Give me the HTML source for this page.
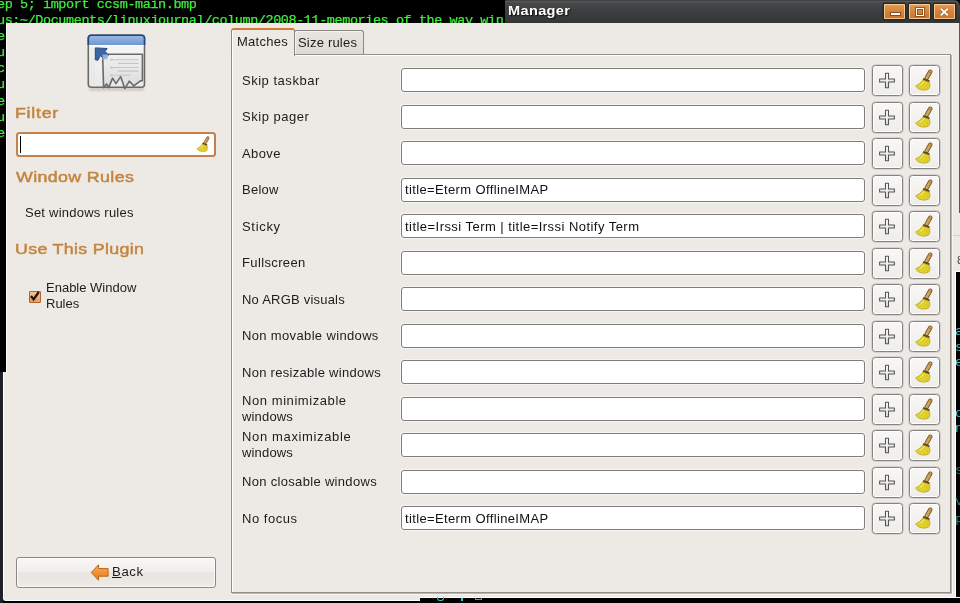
<!DOCTYPE html>
<html><head><meta charset="utf-8">
<style>
*{margin:0;padding:0;box-sizing:border-box}
html,body{width:960px;height:603px;overflow:hidden;background:#000}
body{position:relative;font-family:"Liberation Sans",sans-serif;font-size:13px;color:#1a1a1a}
.a{position:absolute}
.g{will-change:transform}
.term{position:absolute;font-family:"Liberation Mono",monospace;font-size:13.5px;letter-spacing:-0.43px;color:#3cec3c;-webkit-text-stroke:0.25px #3cec3c;white-space:pre;line-height:16.2px}
.h{position:absolute;font-weight:normal;font-size:15.5px;color:#c4843f;-webkit-text-stroke:0.5px #c4843f;white-space:nowrap;line-height:18px;transform-origin:0 0}
.t{position:absolute;white-space:nowrap;color:#1c1c1c;line-height:16px}
.entry{position:absolute;left:401px;width:464px;height:24px;background:#fff;border:1px solid #7f7d7a;border-radius:3px;box-shadow:0 0 0 1px rgba(255,255,255,.5)}
.btn{position:absolute;width:31px;height:31px;border:1px solid #858380;border-radius:3.5px;background:linear-gradient(#f8f7f5,#efedea);box-shadow:inset 0 0 0 1px #fff, 0 0 0 .5px rgba(120,118,115,.4)}
.btn svg{position:absolute;left:-1px;top:-1px}
.lbl{position:absolute;left:242px;white-space:nowrap;color:#1c1c1c;line-height:16px}
.etx{position:absolute;left:405px;white-space:nowrap;color:#111;line-height:16px}
</style></head><body>
<div class="term g" style="left:-2.8px;top:-2.6px">ep 5; import ccsm-main.bmp
us:~/Documents/linuxjournal/column/2008-11-memories of the way win</div>
<div class="term g" style="left:-2.8px;top:28.7px">e</div><div class="term g" style="left:-2.8px;top:44.9px">u</div><div class="term g" style="left:-2.8px;top:61.1px">c</div><div class="term g" style="left:-2.8px;top:77.3px">u</div><div class="term g" style="left:-2.8px;top:93.5px">e</div><div class="term g" style="left:-2.8px;top:109.7px">u</div><div class="term g" style="left:-2.8px;top:125.9px">e</div>
<div class="a" style="left:505px;top:0;width:455px;height:23px;background:linear-gradient(#2a2b2b 0,#58595a 1px,#474849 3px,#3d3e3f 50%,#343536 100%);border-top-right-radius:6px"></div>
<div class="a g" style="left:508px;top:3px;font-weight:bold;font-size:13.5px;line-height:16px;color:#fff;text-shadow:1px 1px 1px #111;letter-spacing:0.3px;transform:scaleX(1.08);transform-origin:0 0">Manager</div>
<div class="a" style="left:884px;top:4px;width:21px;height:15px;border-radius:1px;background:linear-gradient(#e79c52,#d6833a 50%,#cc7630);box-shadow:0 0 0 1.5px #262828, inset 0 0 0 1px rgba(255,222,175,.75)"></div><div class="a" style="left:909px;top:4px;width:21px;height:15px;border-radius:1px;background:linear-gradient(#e79c52,#d6833a 50%,#cc7630);box-shadow:0 0 0 1.5px #262828, inset 0 0 0 1px rgba(255,222,175,.75)"></div><div class="a" style="left:934px;top:4px;width:21px;height:15px;border-radius:1px;background:linear-gradient(#e79c52,#d6833a 50%,#cc7630);box-shadow:0 0 0 1.5px #262828, inset 0 0 0 1px rgba(255,222,175,.75)"></div><div class="a" style="left:891px;top:12.5px;width:8.5px;height:2.6px;background:#fff;box-shadow:0 0 0 1px rgba(80,35,0,.55)"></div><div class="a" style="left:916px;top:8px;width:7.6px;height:7.6px;border:1.7px solid #fff;box-shadow:0 0 0 1px rgba(80,35,0,.5), inset 0 0 0 1px rgba(80,35,0,.5)"></div><svg class="a" style="left:938px;top:5px" width="13" height="13" viewBox="0 0 13 13"><path d="M2.8 3.6l7 6.6M9.8 3.6l-7 6.6" stroke="#5a2a00" stroke-opacity=".4" stroke-width="3.2"/><path d="M2.8 3.6l7 6.6M9.8 3.6l-7 6.6" stroke="#fff" stroke-width="1.9"/></svg>
<div class="a" style="left:6px;top:23px;width:954px;height:575px;background:#edeae6;border-left:1px solid #fff"></div>
<div class="a" style="left:958.5px;top:23px;width:1px;height:190px;background:#5a5856"></div>
<div class="a" style="left:952px;top:235px;width:8px;height:1px;background:#d6d3cf"></div>
<div class="a g" style="left:957.3px;top:251.5px;font-size:11.5px;line-height:16px;color:#4a4a4a">8</div>
<div class="a" style="left:0;top:372px;width:3px;height:231px;background:#1d2029"></div>
<div class="a" style="left:3px;top:372px;width:417px;height:229px;background:#edeae6;border-left:1px solid #fff;border-bottom:1px solid #fff;border-bottom-left-radius:3px"></div>
<div class="a" style="left:956px;top:272px;width:4px;height:331px;background:#000;box-shadow:-1px -1px 0 #fff"></div>
<div class="a" style="left:420px;top:598px;width:540px;height:5px;background:#000;box-shadow:0 -1px 0 #fff"></div>
<div class="a g" style="left:955px;top:324.3px;font-family:'Liberation Mono',monospace;font-size:13.5px;line-height:16.2px;color:#3cc6c6">a</div><div class="a g" style="left:955px;top:340.3px;font-family:'Liberation Mono',monospace;font-size:13.5px;line-height:16.2px;color:#3cc6c6">s</div><div class="a g" style="left:955px;top:355.3px;font-family:'Liberation Mono',monospace;font-size:13.5px;line-height:16.2px;color:#3cc6c6">e</div><div class="a g" style="left:955px;top:406.3px;font-family:'Liberation Mono',monospace;font-size:13.5px;line-height:16.2px;color:#3cc6c6">o</div><div class="a g" style="left:955px;top:421.3px;font-family:'Liberation Mono',monospace;font-size:13.5px;line-height:16.2px;color:#3cc6c6">n</div><div class="a g" style="left:955px;top:463.3px;font-family:'Liberation Mono',monospace;font-size:13.5px;line-height:16.2px;color:#2f7878">s</div><div class="a g" style="left:955px;top:494.3px;font-family:'Liberation Mono',monospace;font-size:13.5px;line-height:16.2px;color:#2f7878">v</div><div class="a g" style="left:955px;top:514.3px;font-family:'Liberation Mono',monospace;font-size:13.5px;line-height:16.2px;color:#2f7878">F</div><div class="a" style="left:956px;top:271px;width:4px;height:1px;background:#fff"></div><div class="a" style="left:437px;top:597px;width:7px;height:4px;border:1px solid #3cc6c6;border-top:none;border-radius:0 0 3px 3px"></div><div class="a" style="left:461px;top:598px;width:2px;height:3px;background:#3cc6c6"></div><div class="a" style="left:475px;top:598px;width:7px;height:2px;border:1px solid #6a9a7a;border-top:none"></div>
<svg class="a" style="left:85px;top:32px" width="62" height="62" viewBox="0 0 62 62">
<defs><linearGradient id="tb" x1="0" y1="0" x2="0" y2="1"><stop offset="0" stop-color="#9ab9e6"/><stop offset="1" stop-color="#6f97d0"/></linearGradient>
<linearGradient id="bd" x1="0" y1="0" x2="0" y2="1"><stop offset="0" stop-color="#f8f8f8"/><stop offset="1" stop-color="#e9e9e9"/></linearGradient>
<linearGradient id="pp" x1="0" y1="0" x2="0" y2="1"><stop offset="0" stop-color="#f0f0f0"/><stop offset="1" stop-color="#dcdcdc"/></linearGradient>
<filter id="bl"><feGaussianBlur stdDeviation="1.2"/></filter></defs>
<rect x="4" y="55" width="55" height="4" rx="2" fill="#000" opacity=".12" filter="url(#bl)"/>
<rect x="3.3" y="3.3" width="56.2" height="52" rx="3" fill="url(#bd)" stroke="#6a6a68" stroke-width="1.6"/>
<path d="M3.3 6.3a3 3 0 0 1 3-3h50.2a3 3 0 0 1 3 3v6.8H3.3z" fill="url(#tb)"/>
<path d="M3.3 13.1V6.3a3 3 0 0 1 3-3h50.2a3 3 0 0 1 3 3v6.8" fill="none" stroke="#23457c" stroke-width="1.6"/>
<path d="M4.2 13.6h54.4" stroke="#fafbfd" stroke-width="1.2"/>
<path d="M6.5 16v37M9 16v37" stroke="#e2e2e2" stroke-width=".8"/>
<path d="M17.6 22.3H57.4V48.6l-2 .3-6.6 5-4.4-4.7-4.6 7.4-4.2-12-4.6 7-3.4-5.5-4 9.5-2-3.7-3 3.7z" fill="url(#pp)" stroke="#6a6a68" stroke-width="1.6" stroke-linejoin="round"/>
<path d="M25.5 27.8h28M33 31.4h20.5M25.5 35.5h28M33 39.1h20.5M25.5 43.2h20" stroke="#c6c6c6" stroke-width="1.1"/>
<circle cx="26.5" cy="27.8" r="1" fill="#c0c0c0"/><circle cx="26.5" cy="35.5" r="1" fill="#c0c0c0"/><circle cx="26.5" cy="43.2" r="1" fill="#c0c0c0"/>
<path d="M10.3 15.9l11.8.6-2.1 3 3.6 3.6-4.6 3.6-3.6-3.1-2.5 4.7-2.6-.5z" fill="#3d66a6" stroke="#264b84" stroke-width="1" stroke-linejoin="round"/>
<path d="M17.5 22.5h5.5v5h-5.5z" fill="#a9c1e4" opacity=".8"/>
</svg>
<div class="h g" style="left:15.2px;top:104px;transform:scaleX(1.15);letter-spacing:0.64px">Filter</div>
<div class="a" style="left:16px;top:132px;width:200px;height:25px;background:#fff;border:2px solid #c4804a;border-radius:3.5px"></div>
<div class="a" style="left:20px;top:136px;width:1px;height:17px;background:#000"></div>
<div class="a" style="left:0;top:0"><svg width="23" height="23" viewBox="0 0 31 31" style="position:absolute;left:192.3px;top:133px"><path d="M21.3 6.7L17.6 13.2" stroke="#7b5524" stroke-width="4.4" stroke-linecap="round"/>
<path d="M21.3 6.7L17.6 13.2" stroke="#cba45e" stroke-width="2.7" stroke-linecap="round"/>
<circle cx="21" cy="7.4" r=".6" fill="#8a6030"/>
<path d="M14 14.1L20.4 16.6" stroke="#5a4626" stroke-width="2.5"/>
<path d="M13.8 15.1L20.5 17.6C21.1 19.6 21 22 20 23.6C18 25.4 13.2 25.6 10.1 24.1C8.4 23.2 7.2 22.1 6.8 20.8C9.5 19.6 12.2 17.6 13.8 15.1Z" fill="#e4d42e" stroke="#bca820" stroke-width=".9" stroke-linejoin="round"/>
<path d="M10.4 22.6c2.2-1 4.3-3 5.5-5.2M14 24.2c1.8-1.4 3.4-3.6 4.2-5.9M17.6 24.3c.9-1.3 1.6-3.2 1.8-5" stroke="#cdb923" stroke-width=".7" fill="none"/>
<path d="M11.4 20.6c1.4-.9 2.8-2.4 3.6-3.9" stroke="#f7f090" stroke-width="1" fill="none"/></svg></div>
<div class="h g" style="left:15.6px;top:168px;transform:scaleX(1.15);letter-spacing:0.31px">Window Rules</div>
<div class="t g" style="left:25px;top:204.7px;letter-spacing:0.23px">Set windows rules</div>
<div class="h g" style="left:15.4px;top:240px;transform:scaleX(1.15);letter-spacing:0.27px">Use This Plugin</div>
<div class="a" style="left:28.5px;top:290.5px;width:12px;height:12px;background:linear-gradient(#f4c397,#e59d62);border:1px solid #b3642c;border-radius:1px"></div><svg class="a" style="left:27px;top:288px" width="15" height="15" viewBox="0 0 15 15"><path d="M4 8l2.6 3.4L11.8 4" stroke="#231208" stroke-width="2.2" fill="none"/></svg>
<div class="t g" style="left:45.8px;top:279.9px">Enable Window<br>Rules</div>
<div class="a" style="left:16px;top:557px;width:200px;height:31px;border:1px solid #8a8784;border-radius:3px;background:linear-gradient(#f9f8f6,#f0eeeb 48%,#e8e5e1 52%,#edeae7);box-shadow:inset 0 0 0 1px rgba(255,255,255,.7)"></div>
<svg class="a" style="left:89px;top:563px" width="21" height="19" viewBox="0 0 21 19"><defs><linearGradient id="ar" x1="0" y1="0" x2="0" y2="1"><stop offset="0" stop-color="#fbb060"/><stop offset="1" stop-color="#e77514"/></linearGradient></defs><path d="M2.3 9.5L9.5 1.8v3.8h9.6v7.6H9.5v4z" fill="url(#ar)" stroke="#c2620f" stroke-width="1" stroke-linejoin="round"/></svg>
<div class="t g" style="left:112px;top:563.8px;letter-spacing:0.6px;font-size:13.2px"><span style="text-decoration:underline;text-underline-offset:1px">B</span>ack</div>
<div class="a" style="left:231px;top:54px;width:720px;height:539px;border:1px solid #948f8a;box-shadow:inset 1px 1px 0 #fff, 1px 1px 0 #b9b4ae, 2px 2px 0 #f8f6f3"></div>
<div class="a" style="left:231px;top:28px;width:64px;height:28px;background:#edeae6;border:1px solid #8b8884;border-bottom:none;border-top:2px solid #d67a3a;border-radius:3px 3px 0 0;box-shadow:inset 1px 0 0 #fff"></div>
<div class="t g" style="left:236.9px;top:34.2px;letter-spacing:0.25px">Matches</div>
<div class="a" style="left:294px;top:30px;width:70px;height:24px;background:linear-gradient(#e8e5e1,#dedbd7);border:1px solid #8b8884;border-bottom:none;border-radius:3px 3px 0 0;box-shadow:inset 1px 1px 0 rgba(255,255,255,.6)"></div>
<div class="t g" style="left:298.2px;top:34.7px;letter-spacing:0.2px">Size rules</div>
<div class="entry" style="top:68.0px"></div><div class="lbl g" style="top:72.8px;letter-spacing:0.518px">Skip taskbar</div><div class="btn" style="left:872px;top:65.0px"><svg width="31" height="31" viewBox="0 0 31 31"><defs><linearGradient id="pg" x1="0" y1="0" x2="0" y2="1"><stop offset="0" stop-color="#fdfdfd"/><stop offset="1" stop-color="#dcdcdc"/></linearGradient></defs><path d="M13.5 8.2h3v5.8h5.9v3h-5.9v5.8h-3v-5.8h-5.9v-3h5.9z" fill="url(#pg)" stroke="#555" stroke-width="1.05" stroke-linejoin="round"/></svg></div><div class="btn" style="left:909px;top:65.0px"><svg width="31" height="31" viewBox="0 0 31 31" style="position:absolute;left:-1px;top:-1px"><path d="M21.3 6.7L17.6 13.2" stroke="#7b5524" stroke-width="4.4" stroke-linecap="round"/>
<path d="M21.3 6.7L17.6 13.2" stroke="#cba45e" stroke-width="2.7" stroke-linecap="round"/>
<circle cx="21" cy="7.4" r=".6" fill="#8a6030"/>
<path d="M14 14.1L20.4 16.6" stroke="#5a4626" stroke-width="2.5"/>
<path d="M13.8 15.1L20.5 17.6C21.1 19.6 21 22 20 23.6C18 25.4 13.2 25.6 10.1 24.1C8.4 23.2 7.2 22.1 6.8 20.8C9.5 19.6 12.2 17.6 13.8 15.1Z" fill="#e4d42e" stroke="#bca820" stroke-width=".9" stroke-linejoin="round"/>
<path d="M10.4 22.6c2.2-1 4.3-3 5.5-5.2M14 24.2c1.8-1.4 3.4-3.6 4.2-5.9M17.6 24.3c.9-1.3 1.6-3.2 1.8-5" stroke="#cdb923" stroke-width=".7" fill="none"/>
<path d="M11.4 20.6c1.4-.9 2.8-2.4 3.6-3.9" stroke="#f7f090" stroke-width="1" fill="none"/></svg></div>
<div class="entry" style="top:104.5px"></div><div class="lbl g" style="top:109.3px;letter-spacing:0.522px">Skip pager</div><div class="btn" style="left:872px;top:101.5px"><svg width="31" height="31" viewBox="0 0 31 31"><defs><linearGradient id="pg" x1="0" y1="0" x2="0" y2="1"><stop offset="0" stop-color="#fdfdfd"/><stop offset="1" stop-color="#dcdcdc"/></linearGradient></defs><path d="M13.5 8.2h3v5.8h5.9v3h-5.9v5.8h-3v-5.8h-5.9v-3h5.9z" fill="url(#pg)" stroke="#555" stroke-width="1.05" stroke-linejoin="round"/></svg></div><div class="btn" style="left:909px;top:101.5px"><svg width="31" height="31" viewBox="0 0 31 31" style="position:absolute;left:-1px;top:-1px"><path d="M21.3 6.7L17.6 13.2" stroke="#7b5524" stroke-width="4.4" stroke-linecap="round"/>
<path d="M21.3 6.7L17.6 13.2" stroke="#cba45e" stroke-width="2.7" stroke-linecap="round"/>
<circle cx="21" cy="7.4" r=".6" fill="#8a6030"/>
<path d="M14 14.1L20.4 16.6" stroke="#5a4626" stroke-width="2.5"/>
<path d="M13.8 15.1L20.5 17.6C21.1 19.6 21 22 20 23.6C18 25.4 13.2 25.6 10.1 24.1C8.4 23.2 7.2 22.1 6.8 20.8C9.5 19.6 12.2 17.6 13.8 15.1Z" fill="#e4d42e" stroke="#bca820" stroke-width=".9" stroke-linejoin="round"/>
<path d="M10.4 22.6c2.2-1 4.3-3 5.5-5.2M14 24.2c1.8-1.4 3.4-3.6 4.2-5.9M17.6 24.3c.9-1.3 1.6-3.2 1.8-5" stroke="#cdb923" stroke-width=".7" fill="none"/>
<path d="M11.4 20.6c1.4-.9 2.8-2.4 3.6-3.9" stroke="#f7f090" stroke-width="1" fill="none"/></svg></div>
<div class="entry" style="top:141.0px"></div><div class="lbl g" style="top:145.8px;letter-spacing:0.375px">Above</div><div class="btn" style="left:872px;top:138.0px"><svg width="31" height="31" viewBox="0 0 31 31"><defs><linearGradient id="pg" x1="0" y1="0" x2="0" y2="1"><stop offset="0" stop-color="#fdfdfd"/><stop offset="1" stop-color="#dcdcdc"/></linearGradient></defs><path d="M13.5 8.2h3v5.8h5.9v3h-5.9v5.8h-3v-5.8h-5.9v-3h5.9z" fill="url(#pg)" stroke="#555" stroke-width="1.05" stroke-linejoin="round"/></svg></div><div class="btn" style="left:909px;top:138.0px"><svg width="31" height="31" viewBox="0 0 31 31" style="position:absolute;left:-1px;top:-1px"><path d="M21.3 6.7L17.6 13.2" stroke="#7b5524" stroke-width="4.4" stroke-linecap="round"/>
<path d="M21.3 6.7L17.6 13.2" stroke="#cba45e" stroke-width="2.7" stroke-linecap="round"/>
<circle cx="21" cy="7.4" r=".6" fill="#8a6030"/>
<path d="M14 14.1L20.4 16.6" stroke="#5a4626" stroke-width="2.5"/>
<path d="M13.8 15.1L20.5 17.6C21.1 19.6 21 22 20 23.6C18 25.4 13.2 25.6 10.1 24.1C8.4 23.2 7.2 22.1 6.8 20.8C9.5 19.6 12.2 17.6 13.8 15.1Z" fill="#e4d42e" stroke="#bca820" stroke-width=".9" stroke-linejoin="round"/>
<path d="M10.4 22.6c2.2-1 4.3-3 5.5-5.2M14 24.2c1.8-1.4 3.4-3.6 4.2-5.9M17.6 24.3c.9-1.3 1.6-3.2 1.8-5" stroke="#cdb923" stroke-width=".7" fill="none"/>
<path d="M11.4 20.6c1.4-.9 2.8-2.4 3.6-3.9" stroke="#f7f090" stroke-width="1" fill="none"/></svg></div>
<div class="entry" style="top:177.5px"></div><div class="etx g" style="top:182.0px;letter-spacing:0.364px">title=Eterm OfflineIMAP</div><div class="lbl g" style="top:182.3px;letter-spacing:0.250px">Below</div><div class="btn" style="left:872px;top:174.5px"><svg width="31" height="31" viewBox="0 0 31 31"><defs><linearGradient id="pg" x1="0" y1="0" x2="0" y2="1"><stop offset="0" stop-color="#fdfdfd"/><stop offset="1" stop-color="#dcdcdc"/></linearGradient></defs><path d="M13.5 8.2h3v5.8h5.9v3h-5.9v5.8h-3v-5.8h-5.9v-3h5.9z" fill="url(#pg)" stroke="#555" stroke-width="1.05" stroke-linejoin="round"/></svg></div><div class="btn" style="left:909px;top:174.5px"><svg width="31" height="31" viewBox="0 0 31 31" style="position:absolute;left:-1px;top:-1px"><path d="M21.3 6.7L17.6 13.2" stroke="#7b5524" stroke-width="4.4" stroke-linecap="round"/>
<path d="M21.3 6.7L17.6 13.2" stroke="#cba45e" stroke-width="2.7" stroke-linecap="round"/>
<circle cx="21" cy="7.4" r=".6" fill="#8a6030"/>
<path d="M14 14.1L20.4 16.6" stroke="#5a4626" stroke-width="2.5"/>
<path d="M13.8 15.1L20.5 17.6C21.1 19.6 21 22 20 23.6C18 25.4 13.2 25.6 10.1 24.1C8.4 23.2 7.2 22.1 6.8 20.8C9.5 19.6 12.2 17.6 13.8 15.1Z" fill="#e4d42e" stroke="#bca820" stroke-width=".9" stroke-linejoin="round"/>
<path d="M10.4 22.6c2.2-1 4.3-3 5.5-5.2M14 24.2c1.8-1.4 3.4-3.6 4.2-5.9M17.6 24.3c.9-1.3 1.6-3.2 1.8-5" stroke="#cdb923" stroke-width=".7" fill="none"/>
<path d="M11.4 20.6c1.4-.9 2.8-2.4 3.6-3.9" stroke="#f7f090" stroke-width="1" fill="none"/></svg></div>
<div class="entry" style="top:214.0px"></div><div class="etx g" style="top:218.5px;letter-spacing:0.456px">title=Irssi Term | title=Irssi Notify Term</div><div class="lbl g" style="top:218.8px;letter-spacing:0.680px">Sticky</div><div class="btn" style="left:872px;top:211.0px"><svg width="31" height="31" viewBox="0 0 31 31"><defs><linearGradient id="pg" x1="0" y1="0" x2="0" y2="1"><stop offset="0" stop-color="#fdfdfd"/><stop offset="1" stop-color="#dcdcdc"/></linearGradient></defs><path d="M13.5 8.2h3v5.8h5.9v3h-5.9v5.8h-3v-5.8h-5.9v-3h5.9z" fill="url(#pg)" stroke="#555" stroke-width="1.05" stroke-linejoin="round"/></svg></div><div class="btn" style="left:909px;top:211.0px"><svg width="31" height="31" viewBox="0 0 31 31" style="position:absolute;left:-1px;top:-1px"><path d="M21.3 6.7L17.6 13.2" stroke="#7b5524" stroke-width="4.4" stroke-linecap="round"/>
<path d="M21.3 6.7L17.6 13.2" stroke="#cba45e" stroke-width="2.7" stroke-linecap="round"/>
<circle cx="21" cy="7.4" r=".6" fill="#8a6030"/>
<path d="M14 14.1L20.4 16.6" stroke="#5a4626" stroke-width="2.5"/>
<path d="M13.8 15.1L20.5 17.6C21.1 19.6 21 22 20 23.6C18 25.4 13.2 25.6 10.1 24.1C8.4 23.2 7.2 22.1 6.8 20.8C9.5 19.6 12.2 17.6 13.8 15.1Z" fill="#e4d42e" stroke="#bca820" stroke-width=".9" stroke-linejoin="round"/>
<path d="M10.4 22.6c2.2-1 4.3-3 5.5-5.2M14 24.2c1.8-1.4 3.4-3.6 4.2-5.9M17.6 24.3c.9-1.3 1.6-3.2 1.8-5" stroke="#cdb923" stroke-width=".7" fill="none"/>
<path d="M11.4 20.6c1.4-.9 2.8-2.4 3.6-3.9" stroke="#f7f090" stroke-width="1" fill="none"/></svg></div>
<div class="entry" style="top:250.5px"></div><div class="lbl g" style="top:255.3px;letter-spacing:0.367px">Fullscreen</div><div class="btn" style="left:872px;top:247.5px"><svg width="31" height="31" viewBox="0 0 31 31"><defs><linearGradient id="pg" x1="0" y1="0" x2="0" y2="1"><stop offset="0" stop-color="#fdfdfd"/><stop offset="1" stop-color="#dcdcdc"/></linearGradient></defs><path d="M13.5 8.2h3v5.8h5.9v3h-5.9v5.8h-3v-5.8h-5.9v-3h5.9z" fill="url(#pg)" stroke="#555" stroke-width="1.05" stroke-linejoin="round"/></svg></div><div class="btn" style="left:909px;top:247.5px"><svg width="31" height="31" viewBox="0 0 31 31" style="position:absolute;left:-1px;top:-1px"><path d="M21.3 6.7L17.6 13.2" stroke="#7b5524" stroke-width="4.4" stroke-linecap="round"/>
<path d="M21.3 6.7L17.6 13.2" stroke="#cba45e" stroke-width="2.7" stroke-linecap="round"/>
<circle cx="21" cy="7.4" r=".6" fill="#8a6030"/>
<path d="M14 14.1L20.4 16.6" stroke="#5a4626" stroke-width="2.5"/>
<path d="M13.8 15.1L20.5 17.6C21.1 19.6 21 22 20 23.6C18 25.4 13.2 25.6 10.1 24.1C8.4 23.2 7.2 22.1 6.8 20.8C9.5 19.6 12.2 17.6 13.8 15.1Z" fill="#e4d42e" stroke="#bca820" stroke-width=".9" stroke-linejoin="round"/>
<path d="M10.4 22.6c2.2-1 4.3-3 5.5-5.2M14 24.2c1.8-1.4 3.4-3.6 4.2-5.9M17.6 24.3c.9-1.3 1.6-3.2 1.8-5" stroke="#cdb923" stroke-width=".7" fill="none"/>
<path d="M11.4 20.6c1.4-.9 2.8-2.4 3.6-3.9" stroke="#f7f090" stroke-width="1" fill="none"/></svg></div>
<div class="entry" style="top:287.0px"></div><div class="lbl g" style="top:291.8px;letter-spacing:0.214px">No ARGB visuals</div><div class="btn" style="left:872px;top:284.0px"><svg width="31" height="31" viewBox="0 0 31 31"><defs><linearGradient id="pg" x1="0" y1="0" x2="0" y2="1"><stop offset="0" stop-color="#fdfdfd"/><stop offset="1" stop-color="#dcdcdc"/></linearGradient></defs><path d="M13.5 8.2h3v5.8h5.9v3h-5.9v5.8h-3v-5.8h-5.9v-3h5.9z" fill="url(#pg)" stroke="#555" stroke-width="1.05" stroke-linejoin="round"/></svg></div><div class="btn" style="left:909px;top:284.0px"><svg width="31" height="31" viewBox="0 0 31 31" style="position:absolute;left:-1px;top:-1px"><path d="M21.3 6.7L17.6 13.2" stroke="#7b5524" stroke-width="4.4" stroke-linecap="round"/>
<path d="M21.3 6.7L17.6 13.2" stroke="#cba45e" stroke-width="2.7" stroke-linecap="round"/>
<circle cx="21" cy="7.4" r=".6" fill="#8a6030"/>
<path d="M14 14.1L20.4 16.6" stroke="#5a4626" stroke-width="2.5"/>
<path d="M13.8 15.1L20.5 17.6C21.1 19.6 21 22 20 23.6C18 25.4 13.2 25.6 10.1 24.1C8.4 23.2 7.2 22.1 6.8 20.8C9.5 19.6 12.2 17.6 13.8 15.1Z" fill="#e4d42e" stroke="#bca820" stroke-width=".9" stroke-linejoin="round"/>
<path d="M10.4 22.6c2.2-1 4.3-3 5.5-5.2M14 24.2c1.8-1.4 3.4-3.6 4.2-5.9M17.6 24.3c.9-1.3 1.6-3.2 1.8-5" stroke="#cdb923" stroke-width=".7" fill="none"/>
<path d="M11.4 20.6c1.4-.9 2.8-2.4 3.6-3.9" stroke="#f7f090" stroke-width="1" fill="none"/></svg></div>
<div class="entry" style="top:323.5px"></div><div class="lbl g" style="top:328.3px;letter-spacing:0.350px">Non movable windows</div><div class="btn" style="left:872px;top:320.5px"><svg width="31" height="31" viewBox="0 0 31 31"><defs><linearGradient id="pg" x1="0" y1="0" x2="0" y2="1"><stop offset="0" stop-color="#fdfdfd"/><stop offset="1" stop-color="#dcdcdc"/></linearGradient></defs><path d="M13.5 8.2h3v5.8h5.9v3h-5.9v5.8h-3v-5.8h-5.9v-3h5.9z" fill="url(#pg)" stroke="#555" stroke-width="1.05" stroke-linejoin="round"/></svg></div><div class="btn" style="left:909px;top:320.5px"><svg width="31" height="31" viewBox="0 0 31 31" style="position:absolute;left:-1px;top:-1px"><path d="M21.3 6.7L17.6 13.2" stroke="#7b5524" stroke-width="4.4" stroke-linecap="round"/>
<path d="M21.3 6.7L17.6 13.2" stroke="#cba45e" stroke-width="2.7" stroke-linecap="round"/>
<circle cx="21" cy="7.4" r=".6" fill="#8a6030"/>
<path d="M14 14.1L20.4 16.6" stroke="#5a4626" stroke-width="2.5"/>
<path d="M13.8 15.1L20.5 17.6C21.1 19.6 21 22 20 23.6C18 25.4 13.2 25.6 10.1 24.1C8.4 23.2 7.2 22.1 6.8 20.8C9.5 19.6 12.2 17.6 13.8 15.1Z" fill="#e4d42e" stroke="#bca820" stroke-width=".9" stroke-linejoin="round"/>
<path d="M10.4 22.6c2.2-1 4.3-3 5.5-5.2M14 24.2c1.8-1.4 3.4-3.6 4.2-5.9M17.6 24.3c.9-1.3 1.6-3.2 1.8-5" stroke="#cdb923" stroke-width=".7" fill="none"/>
<path d="M11.4 20.6c1.4-.9 2.8-2.4 3.6-3.9" stroke="#f7f090" stroke-width="1" fill="none"/></svg></div>
<div class="entry" style="top:360.0px"></div><div class="lbl g" style="top:364.8px;letter-spacing:0.285px">Non resizable windows</div><div class="btn" style="left:872px;top:357.0px"><svg width="31" height="31" viewBox="0 0 31 31"><defs><linearGradient id="pg" x1="0" y1="0" x2="0" y2="1"><stop offset="0" stop-color="#fdfdfd"/><stop offset="1" stop-color="#dcdcdc"/></linearGradient></defs><path d="M13.5 8.2h3v5.8h5.9v3h-5.9v5.8h-3v-5.8h-5.9v-3h5.9z" fill="url(#pg)" stroke="#555" stroke-width="1.05" stroke-linejoin="round"/></svg></div><div class="btn" style="left:909px;top:357.0px"><svg width="31" height="31" viewBox="0 0 31 31" style="position:absolute;left:-1px;top:-1px"><path d="M21.3 6.7L17.6 13.2" stroke="#7b5524" stroke-width="4.4" stroke-linecap="round"/>
<path d="M21.3 6.7L17.6 13.2" stroke="#cba45e" stroke-width="2.7" stroke-linecap="round"/>
<circle cx="21" cy="7.4" r=".6" fill="#8a6030"/>
<path d="M14 14.1L20.4 16.6" stroke="#5a4626" stroke-width="2.5"/>
<path d="M13.8 15.1L20.5 17.6C21.1 19.6 21 22 20 23.6C18 25.4 13.2 25.6 10.1 24.1C8.4 23.2 7.2 22.1 6.8 20.8C9.5 19.6 12.2 17.6 13.8 15.1Z" fill="#e4d42e" stroke="#bca820" stroke-width=".9" stroke-linejoin="round"/>
<path d="M10.4 22.6c2.2-1 4.3-3 5.5-5.2M14 24.2c1.8-1.4 3.4-3.6 4.2-5.9M17.6 24.3c.9-1.3 1.6-3.2 1.8-5" stroke="#cdb923" stroke-width=".7" fill="none"/>
<path d="M11.4 20.6c1.4-.9 2.8-2.4 3.6-3.9" stroke="#f7f090" stroke-width="1" fill="none"/></svg></div>
<div class="entry" style="top:396.5px"></div><div class="lbl g" style="top:392.7px"><span style="letter-spacing:0.571px">Non minimizable</span><br><span style="letter-spacing:0.167px">windows</span></div><div class="btn" style="left:872px;top:393.5px"><svg width="31" height="31" viewBox="0 0 31 31"><defs><linearGradient id="pg" x1="0" y1="0" x2="0" y2="1"><stop offset="0" stop-color="#fdfdfd"/><stop offset="1" stop-color="#dcdcdc"/></linearGradient></defs><path d="M13.5 8.2h3v5.8h5.9v3h-5.9v5.8h-3v-5.8h-5.9v-3h5.9z" fill="url(#pg)" stroke="#555" stroke-width="1.05" stroke-linejoin="round"/></svg></div><div class="btn" style="left:909px;top:393.5px"><svg width="31" height="31" viewBox="0 0 31 31" style="position:absolute;left:-1px;top:-1px"><path d="M21.3 6.7L17.6 13.2" stroke="#7b5524" stroke-width="4.4" stroke-linecap="round"/>
<path d="M21.3 6.7L17.6 13.2" stroke="#cba45e" stroke-width="2.7" stroke-linecap="round"/>
<circle cx="21" cy="7.4" r=".6" fill="#8a6030"/>
<path d="M14 14.1L20.4 16.6" stroke="#5a4626" stroke-width="2.5"/>
<path d="M13.8 15.1L20.5 17.6C21.1 19.6 21 22 20 23.6C18 25.4 13.2 25.6 10.1 24.1C8.4 23.2 7.2 22.1 6.8 20.8C9.5 19.6 12.2 17.6 13.8 15.1Z" fill="#e4d42e" stroke="#bca820" stroke-width=".9" stroke-linejoin="round"/>
<path d="M10.4 22.6c2.2-1 4.3-3 5.5-5.2M14 24.2c1.8-1.4 3.4-3.6 4.2-5.9M17.6 24.3c.9-1.3 1.6-3.2 1.8-5" stroke="#cdb923" stroke-width=".7" fill="none"/>
<path d="M11.4 20.6c1.4-.9 2.8-2.4 3.6-3.9" stroke="#f7f090" stroke-width="1" fill="none"/></svg></div>
<div class="entry" style="top:433.0px"></div><div class="lbl g" style="top:429.2px"><span style="letter-spacing:0.643px">Non maximizable</span><br><span style="letter-spacing:0.167px">windows</span></div><div class="btn" style="left:872px;top:430.0px"><svg width="31" height="31" viewBox="0 0 31 31"><defs><linearGradient id="pg" x1="0" y1="0" x2="0" y2="1"><stop offset="0" stop-color="#fdfdfd"/><stop offset="1" stop-color="#dcdcdc"/></linearGradient></defs><path d="M13.5 8.2h3v5.8h5.9v3h-5.9v5.8h-3v-5.8h-5.9v-3h5.9z" fill="url(#pg)" stroke="#555" stroke-width="1.05" stroke-linejoin="round"/></svg></div><div class="btn" style="left:909px;top:430.0px"><svg width="31" height="31" viewBox="0 0 31 31" style="position:absolute;left:-1px;top:-1px"><path d="M21.3 6.7L17.6 13.2" stroke="#7b5524" stroke-width="4.4" stroke-linecap="round"/>
<path d="M21.3 6.7L17.6 13.2" stroke="#cba45e" stroke-width="2.7" stroke-linecap="round"/>
<circle cx="21" cy="7.4" r=".6" fill="#8a6030"/>
<path d="M14 14.1L20.4 16.6" stroke="#5a4626" stroke-width="2.5"/>
<path d="M13.8 15.1L20.5 17.6C21.1 19.6 21 22 20 23.6C18 25.4 13.2 25.6 10.1 24.1C8.4 23.2 7.2 22.1 6.8 20.8C9.5 19.6 12.2 17.6 13.8 15.1Z" fill="#e4d42e" stroke="#bca820" stroke-width=".9" stroke-linejoin="round"/>
<path d="M10.4 22.6c2.2-1 4.3-3 5.5-5.2M14 24.2c1.8-1.4 3.4-3.6 4.2-5.9M17.6 24.3c.9-1.3 1.6-3.2 1.8-5" stroke="#cdb923" stroke-width=".7" fill="none"/>
<path d="M11.4 20.6c1.4-.9 2.8-2.4 3.6-3.9" stroke="#f7f090" stroke-width="1" fill="none"/></svg></div>
<div class="entry" style="top:469.5px"></div><div class="lbl g" style="top:474.3px;letter-spacing:0.316px">Non closable windows</div><div class="btn" style="left:872px;top:466.5px"><svg width="31" height="31" viewBox="0 0 31 31"><defs><linearGradient id="pg" x1="0" y1="0" x2="0" y2="1"><stop offset="0" stop-color="#fdfdfd"/><stop offset="1" stop-color="#dcdcdc"/></linearGradient></defs><path d="M13.5 8.2h3v5.8h5.9v3h-5.9v5.8h-3v-5.8h-5.9v-3h5.9z" fill="url(#pg)" stroke="#555" stroke-width="1.05" stroke-linejoin="round"/></svg></div><div class="btn" style="left:909px;top:466.5px"><svg width="31" height="31" viewBox="0 0 31 31" style="position:absolute;left:-1px;top:-1px"><path d="M21.3 6.7L17.6 13.2" stroke="#7b5524" stroke-width="4.4" stroke-linecap="round"/>
<path d="M21.3 6.7L17.6 13.2" stroke="#cba45e" stroke-width="2.7" stroke-linecap="round"/>
<circle cx="21" cy="7.4" r=".6" fill="#8a6030"/>
<path d="M14 14.1L20.4 16.6" stroke="#5a4626" stroke-width="2.5"/>
<path d="M13.8 15.1L20.5 17.6C21.1 19.6 21 22 20 23.6C18 25.4 13.2 25.6 10.1 24.1C8.4 23.2 7.2 22.1 6.8 20.8C9.5 19.6 12.2 17.6 13.8 15.1Z" fill="#e4d42e" stroke="#bca820" stroke-width=".9" stroke-linejoin="round"/>
<path d="M10.4 22.6c2.2-1 4.3-3 5.5-5.2M14 24.2c1.8-1.4 3.4-3.6 4.2-5.9M17.6 24.3c.9-1.3 1.6-3.2 1.8-5" stroke="#cdb923" stroke-width=".7" fill="none"/>
<path d="M11.4 20.6c1.4-.9 2.8-2.4 3.6-3.9" stroke="#f7f090" stroke-width="1" fill="none"/></svg></div>
<div class="entry" style="top:506.0px"></div><div class="etx g" style="top:510.5px;letter-spacing:0.364px">title=Eterm OfflineIMAP</div><div class="lbl g" style="top:510.8px;letter-spacing:0.529px">No focus</div><div class="btn" style="left:872px;top:503.0px"><svg width="31" height="31" viewBox="0 0 31 31"><defs><linearGradient id="pg" x1="0" y1="0" x2="0" y2="1"><stop offset="0" stop-color="#fdfdfd"/><stop offset="1" stop-color="#dcdcdc"/></linearGradient></defs><path d="M13.5 8.2h3v5.8h5.9v3h-5.9v5.8h-3v-5.8h-5.9v-3h5.9z" fill="url(#pg)" stroke="#555" stroke-width="1.05" stroke-linejoin="round"/></svg></div><div class="btn" style="left:909px;top:503.0px"><svg width="31" height="31" viewBox="0 0 31 31" style="position:absolute;left:-1px;top:-1px"><path d="M21.3 6.7L17.6 13.2" stroke="#7b5524" stroke-width="4.4" stroke-linecap="round"/>
<path d="M21.3 6.7L17.6 13.2" stroke="#cba45e" stroke-width="2.7" stroke-linecap="round"/>
<circle cx="21" cy="7.4" r=".6" fill="#8a6030"/>
<path d="M14 14.1L20.4 16.6" stroke="#5a4626" stroke-width="2.5"/>
<path d="M13.8 15.1L20.5 17.6C21.1 19.6 21 22 20 23.6C18 25.4 13.2 25.6 10.1 24.1C8.4 23.2 7.2 22.1 6.8 20.8C9.5 19.6 12.2 17.6 13.8 15.1Z" fill="#e4d42e" stroke="#bca820" stroke-width=".9" stroke-linejoin="round"/>
<path d="M10.4 22.6c2.2-1 4.3-3 5.5-5.2M14 24.2c1.8-1.4 3.4-3.6 4.2-5.9M17.6 24.3c.9-1.3 1.6-3.2 1.8-5" stroke="#cdb923" stroke-width=".7" fill="none"/>
<path d="M11.4 20.6c1.4-.9 2.8-2.4 3.6-3.9" stroke="#f7f090" stroke-width="1" fill="none"/></svg></div>
</body></html>
